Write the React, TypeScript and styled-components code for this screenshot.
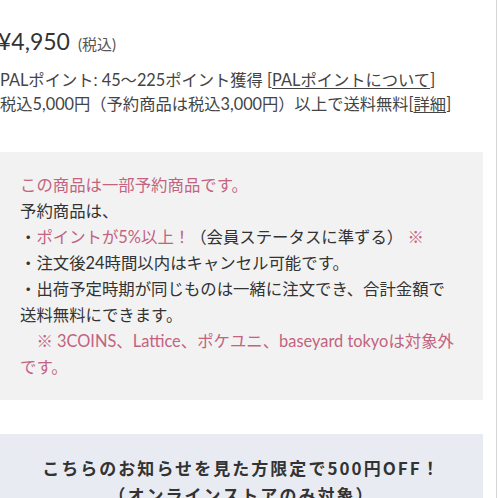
import styled, { createGlobalStyle } from "styled-components";

const Global = createGlobalStyle`
  html, body {
    margin: 0;
    padding: 0;
    background: #fff;
  }
  body {
    font-family: Lato, "Noto Sans CJK JP", sans-serif;
    color: #333;
  }
`;

const Page = styled.div`
  width: 496px;
  min-height: 498px;
  border-right: 1px solid #d6d6d6;
  overflow: hidden;
`;

const Column = styled.div`
  width: 483px;
  padding-top: 26px;
`;

const PriceRow = styled.div`
  display: flex;
  align-items: baseline;
  gap: 8px;
  margin-left: -2px;
  line-height: 30px;
`;

const Price = styled.span`
  font-size: 23px;
  color: #333;
`;

const Tax = styled.span`
  font-size: 15px;
  color: #555;
`;

const InfoList = styled.div`
  margin-top: 9px;
  font-size: 16.3px;
  line-height: 24px;
  color: #444;
`;

const InfoLine = styled.div`
  white-space: nowrap;
`;

const Link = styled.a`
  color: #444;
  text-decoration: underline;
  text-underline-offset: 2px;
`;

const Notice = styled.div`
  margin-top: 36px;
  background: #f2f2f2;
  padding: 20px 10px 20px 20px;
  font-size: 16.4px;
  line-height: 26px;
  color: #333;
  white-space: nowrap;
`;

const NoticeLine = styled.div``;

const Pink = styled.span`
  color: #c3637f;
`;

const Promo = styled.div`
  margin-top: 34px;
  background: #e8ecf2;
  padding: 20px 10px 20px;
  text-align: center;
  font-family: "Noto Sans CJK JP", sans-serif;
  font-weight: 700;
  font-size: 17px;
  line-height: 27px;
  letter-spacing: 0.12em;
  color: #333;
`;

export default function App() {
  return (
    <Page>
      <Global />
      <Column>
        <PriceRow>
          <Price>¥4,950</Price>
          <Tax>(税込)</Tax>
        </PriceRow>
        <InfoList>
          <InfoLine>
            PALポイント: 45～225ポイント獲得 [<Link>PALポイントについて</Link>]
          </InfoLine>
          <InfoLine>
            税込5,000円（予約商品は税込3,000円）以上で送料無料[<Link>詳細</Link>]
          </InfoLine>
        </InfoList>
        <Notice>
          <NoticeLine>
            <Pink>この商品は一部予約商品です。</Pink>
          </NoticeLine>
          <NoticeLine>予約商品は、</NoticeLine>
          <NoticeLine>
            ・<Pink>ポイントが5%以上！</Pink>（会員ステータスに準ずる） <Pink>※</Pink>
          </NoticeLine>
          <NoticeLine>・注文後24時間以内はキャンセル可能です。</NoticeLine>
          <NoticeLine>
            ・出荷予定時期が同じものは一緒に注文でき、合計金額で
            <br />
            送料無料にできます。
          </NoticeLine>
          <NoticeLine>
            <Pink>
              {"\u3000※ 3COINS、Lattice、ポケユニ、baseyard tokyoは対象外"}
              <br />
              です。
            </Pink>
          </NoticeLine>
        </Notice>
        <Promo>
          こちらのお知らせを見た方限定で500円OFF！
          <br />
          （オンラインストアのみ対象）
        </Promo>
      </Column>
    </Page>
  );
}
